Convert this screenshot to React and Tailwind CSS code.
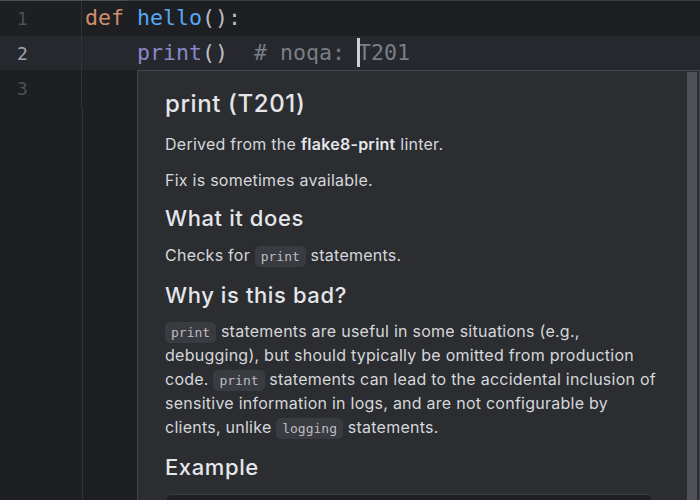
import React from 'react';

const mono = "font-['DejaVu_Sans_Mono','Liberation_Mono',monospace]";

const Code = ({ children }) => (
  <span className={`${mono} text-[13px] leading-[14px] tracking-normal text-[#bcbec4] bg-[#393b40] rounded-[5px] px-[6px] py-[3px]`}>
    {children}
  </span>
);

const Row = ({ num, current, height, children }) => (
  <div className={`flex ${height} ${current ? 'bg-[#26282e]' : ''}`}>
    <div className={`w-[82px] shrink-0 border-r border-[#313337] pl-[17px] flex items-center ${mono} text-[18px] ${current ? 'text-[#a1a3ab]' : 'text-[#4b5059]'}`}>
      {num}
    </div>
    <div className={`flex items-center pl-[3px] ${mono} text-[21.6px] whitespace-pre`}>{children}</div>
  </div>
);

export default function App() {
  return (
    <div className="relative w-[700px] h-[500px] overflow-hidden bg-[#1e1f22]">
      {/* tab strip edge */}
      <div className="flex h-px">
        <div className="w-[127px] bg-[#4a4c50]" />
        <div className="flex-1 bg-[#393b40]" />
      </div>

      <Row num="1" height="h-[35px]">
        <span className="text-[#cf8e6d]">def </span>
        <span className="text-[#56a8f5]">hello</span>
        <span className="text-[#bcbec4]">():</span>
      </Row>
      <Row num="2" current height="h-[34px]">
        <span>    </span>
        <span className="text-[#8888c6]">print</span>
        <span className="text-[#bcbec4]">()</span>
        <span className="text-[#7a7e85]">  # noqa: </span>
        <span className="relative text-[#7a7e85]">
          <span className="absolute -left-[1px] top-[1px] w-[3px] h-[29px] bg-[#ced0d6]" />
          T201
        </span>
      </Row>
      <Row num="3" height="h-[37px]" />
      <div className="ml-[82px] h-[400px] border-l border-[#313337]" />

      {/* quick documentation popup */}
      <div className="absolute left-[137px] top-[70px] right-0 h-[440px] border border-[#43454a] bg-[#2b2d30] font-['Inter','Noto_Sans',sans-serif] text-[#d5d7dc] tracking-[0.25px]">
        <div className="w-[530px] pl-[27px] pt-[19px]">
          <h1 className="text-[24px] leading-[28px] font-medium tracking-[0.6px] text-[#e4e6ea]">print (T201)</h1>
          <p className="mt-[14px] text-[16px] leading-[24px]">
            Derived from the <span className="font-semibold text-[#e4e6ea]">flake8-print</span> linter.
          </p>
          <p className="mt-[12px] text-[16px] leading-[24px]">Fix is sometimes available.</p>
          <h2 className="mt-[12px] text-[22px] leading-[28px] font-medium tracking-[0.6px] text-[#e4e6ea]">What it does</h2>
          <p className="mt-[11px] text-[16px] leading-[24px]">
            Checks for <Code>print</Code> statements.
          </p>
          <h2 className="mt-[14px] text-[22px] leading-[28px] font-medium tracking-[0.6px] text-[#e4e6ea]">Why is this bad?</h2>
          <p className="mt-[10px] text-[16px] leading-[24px] w-[496px]">
            <Code>print</Code> statements are useful in some situations (e.g., debugging), but should typically be
            omitted from production code. <Code>print</Code> statements can lead to the accidental inclusion of
            sensitive information in logs, and are not configurable by clients, unlike <Code>logging</Code>{' '}
            statements.
          </p>
          <h2 className="mt-[14px] text-[22px] leading-[28px] font-medium tracking-[0.6px] text-[#e4e6ea]">Example</h2>
          <div className="mt-[13px] w-[488px] h-[60px] rounded-[6px] border border-[#393b40] bg-[#1e1f22]" />
        </div>
        <div className="absolute right-[2px] top-[1px] bottom-0 w-[10px] bg-[#4e5157]" />
      </div>
    </div>
  );
}
